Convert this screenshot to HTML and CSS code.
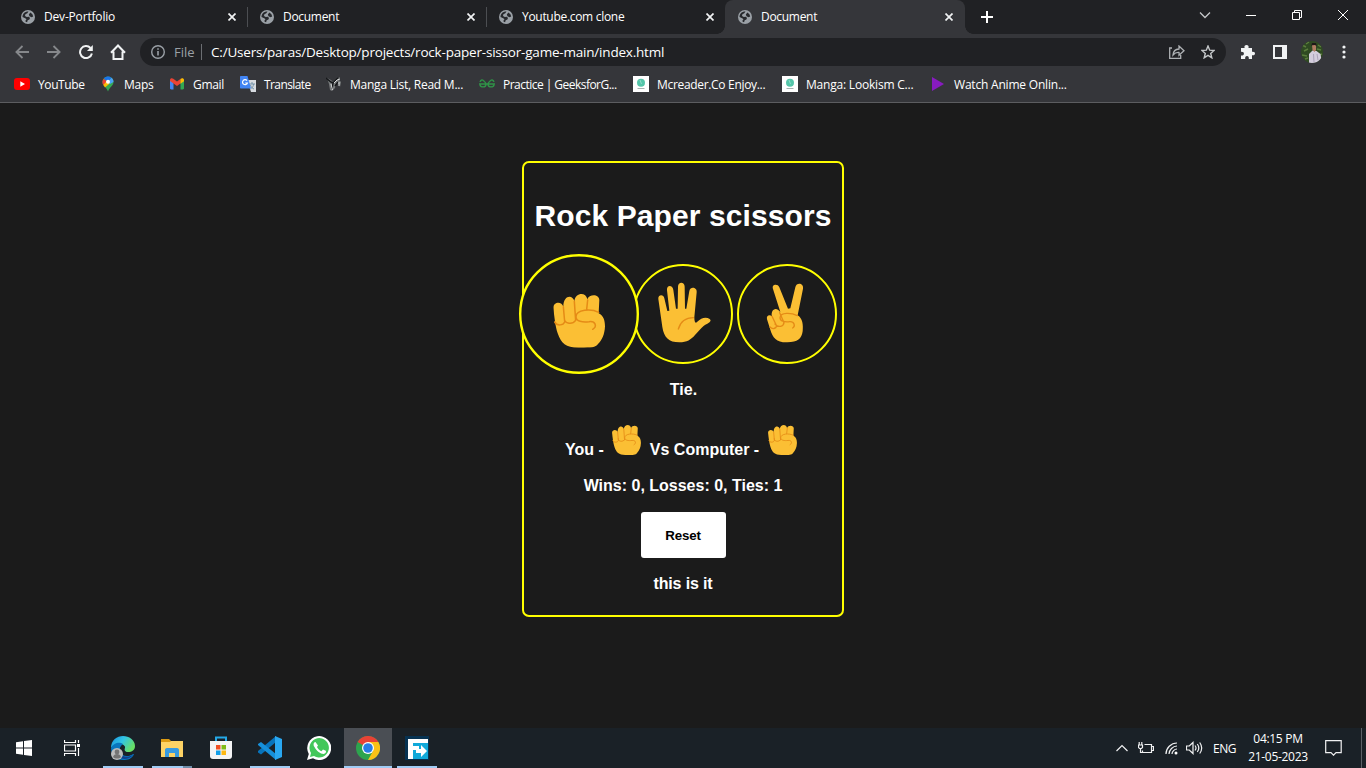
FILE: index.html
```html
<!DOCTYPE html>
<html lang="en">
<head>
<meta charset="utf-8">
<title>Document</title>
<link rel="stylesheet" href="styles.css">
</head>
<body>
<svg class="defs" width="0" height="0">
  <symbol id="globe" viewBox="0 0 14 14"><circle cx="7" cy="7" r="7" fill="#9aa0a6"/><path d="M7.500 1.500L6.300 3.200 4.400 4.200 4 6l1.800.9 2.100-.1 1.100 1.300-.6 1.400-1.700.8-.6 1.900-1.500-.5-.1-1.300 1-1.200-1.300-1L1.500 7C1.500 3.500 4.200 1.300 7.500 1.500zM9.400 2.400l2 1.800.8 2.300-1.700.7-2-1-.7-1.700z" fill="#27292d"/></symbol>
  <symbol id="close" viewBox="0 0 8 8"><path d="M.5.5l7 7M7.500.5l-7 7" stroke="#f1f3f4" stroke-width="1.700" fill="none"/></symbol>
  <symbol id="fist" viewBox="130 147 155 161">
    <path d="M130 189c-1-18 25-22 30-4 0-35 28-37 33-16 3-27 35-29 39-6 5-17 36-17 36 2l-2 40c15 8 19 22 19 39-1 24-9 42-21 53-8 11-19 11-54 11-42 1-56-11-67-43-7-20-10-50-13-76z" fill="#fbbf34"/>
    <path d="M134 231c8 13 26 10 30 0M163 220c0 19 26 18 33 7M160 185l4 45M193 169l4 58M233 165l-3 28M266 202c-23-12-67-9-68 13 0 15 20 17 39 15 20-3 25 15 11 23" fill="none" stroke="#e58b16" stroke-width="4.500" stroke-linecap="round"/>
  </symbol>
  <symbol id="reader" viewBox="0 0 16 16"><path fill="#fff" d="M0 0h16v16H0z"/><circle cx="8" cy="6.800" r="4" fill="#54c5a9"/><path d="M7 4l1.500 4" stroke="#8fdcc9"/><path d="M4.500 12.500h7" stroke="#a7b3b0"/></symbol>
</svg>
<div class="browser">
  <div class="tabs">
    <div class="tab"><svg class="fav"><use href="#globe"/></svg><span class="name t1">Dev-Portfolio</span><svg class="x"><use href="#close"/></svg></div>
    <div class="tab"><svg class="fav"><use href="#globe"/></svg><span class="name t2">Document</span><svg class="x"><use href="#close"/></svg></div>
    <div class="tab last"><svg class="fav"><use href="#globe"/></svg><span class="name t3">Youtube.com clone</span><svg class="x"><use href="#close"/></svg></div>
    <div class="tab active"><svg class="fav"><use href="#globe"/></svg><span class="name t2">Document</span><svg class="x"><use href="#close"/></svg></div>
    <svg class="plus" viewBox="0 0 12 12"><path d="M6 0v12M0 6h12" stroke="#fff" stroke-width="2"/></svg>
    <div class="winctl">
      <svg width="12" height="12" viewBox="0 0 12 12"><path d="M1 3.500l5 5 5-5" class="thin dim"/></svg>
      <svg width="10" height="12" viewBox="0 0 10 12"><path d="M0 6.500h10" class="thin"/></svg>
      <svg width="10" height="12" viewBox="0 0 10 12"><path d="M.5 3.500h7v7h-7zM2.500 3.500v-2h7v7h-2" class="thin"/></svg>
      <svg width="10" height="12" viewBox="0 0 10 12"><path d="M0 1l10 10M10 1L0 11" class="thin"/></svg>
    </div>
  </div>
  <div class="toolbar">
    <div class="nav">
      <svg width="14" height="14" viewBox="0 0 14 14"><path d="M14 7H1.500M7.500 1L1.400 7l6.100 6" fill="none" stroke="#86888b" stroke-width="1.800"/></svg>
      <svg width="14" height="14" viewBox="0 0 14 14"><path d="M0 7h12.500M6.500 1l6.100 6-6.100 6" fill="none" stroke="#86888b" stroke-width="1.800"/></svg>
      <svg width="14" height="14" viewBox="0 0 14 14"><path d="M12.900 8.500A6 6 0 1 1 11.500 3" fill="none" stroke="#f1f3f4" stroke-width="2"/><path d="M13.800 0v6H8z" fill="#f1f3f4"/></svg>
      <svg width="16" height="16" viewBox="0 0 16 16"><path d="M1 8.700L8 1.500l7 7.200M3.500 7.500V15h9V7.500" fill="none" stroke="#f1f3f4" stroke-width="2"/></svg>
    </div>
    <div class="omni">
      <svg width="14" height="14" viewBox="0 0 14 14"><circle cx="7" cy="7" r="6.300" fill="none" stroke="#9aa0a6" stroke-width="1.400"/><path d="M7 6v4.500M7 3.200v1.600" stroke="#9aa0a6" stroke-width="1.600"/></svg>
      <span class="file">File</span><i class="bar"></i><span class="url">C:/Users/paras/Desktop/projects/rock-paper-sissor-game-main/index.html</span>
      <svg class="share" width="16" height="14" viewBox="0 0 16 14"><path d="M3 3H.7v10.300h11V10M4 10c.3-4 2.500-5.800 6-6V1l5 4.700-5 4.500V7.500C7.500 7.300 5.700 8 4 10z" fill="none" stroke="#aeb1b4" stroke-width="1.300"/></svg>
      <svg class="star" width="14" height="14" viewBox="0 0 14 14"><path d="M7 1l1.700 4.200 4.300.3-3.300 2.900 1.100 4.400L7 10.400l-3.800 2.400 1.100-4.400L1 5.500l4.300-.3z" fill="none" stroke="#c4c7c9" stroke-width="1.400"/></svg>
    </div>
    <svg class="ext" width="15" height="15" viewBox="0 0 15 15"><path d="M1 3h3.600C4 .8 5 0 6.500 0S9 .8 8.500 3H12v3.800c2-.4 3 .4 3 1.700s-1 2.100-3 1.700V14H8.800c.3-2-.5-3-1.800-3s-2.100 1-1.800 3H1v-3.500c2 .2 2.900-.6 2.900-1.800S3 6.700 1 6.900z" fill="#f1f3f4"/></svg>
    <svg class="panel" width="14" height="14" viewBox="0 0 14 14"><path d="M0 0h14v14H0zM2 2v10h7V2z" fill="#f1f3f4" fill-rule="evenodd"/></svg>
    <svg class="avatar" width="22" height="22" viewBox="0 0 22 22"><defs><clipPath id="round"><circle cx="11" cy="11" r="11"/></clipPath></defs><g clip-path="url(#round)"><path fill="#2f4a22" d="M0 0h22v22H0z"/><path d="M1 4l4 2M3 10l4-2M1 14l5 1M17 4l3 2M16 8l4 1M5 3l3-2M4 18l3-1M18 14l3-1" stroke="#5a7d3c" stroke-width="1.500"/><path d="M8 22V13l3.500-3.500 4 .5 4 3 1.500 9z" fill="#d4cddd"/><path d="M11 4h4v5l-1.500 2-2-2z" fill="#b17c62"/><path d="M10.300 5L11 2h4l.8 3-2-1-2.500.3z" fill="#1d1818"/><path d="M12.500 13l.5 8M16 13l1 6" stroke="#aaa2b9"/></g></svg>
    <svg class="dots" width="4" height="14" viewBox="0 0 4 14"><g fill="#f1f3f4"><circle cx="2" cy="2" r="1.600"/><circle cx="2" cy="7" r="1.600"/><circle cx="2" cy="12" r="1.600"/></g></svg>
  </div>
  <div class="marks">
    <div class="mark m1"><svg viewBox="0 0 16 16"><rect y="2" width="16" height="12" rx="3" fill="#f00"/><path d="M6.300 5.300v5.400L11 8z" fill="#fff"/></svg><span>YouTube</span></div>
    <div class="mark m2"><svg viewBox="0 0 16 16"><path d="M8 .5A5.400 5.400 0 0 0 2.500 6C2.500 10 6.500 11 8 15.500 9.500 11 13.500 10 13.500 6A5.400 5.400 0 0 0 8 .5z" fill="#34a853"/><path d="M8 6L3.700 2.700A5.500 5.500 0 0 0 3.300 9z" fill="#ea4335"/><path d="M3.300 9L8 3.800 9.700 7.400 5 11.500z" fill="#fbbc04"/><path d="M8 6L3.800 2.500C6 0 9.500 0 11.500 1.800z" fill="#1a73e8"/><path d="M11.500 1.800L8 6l2 2 3.500-2c0-2-.8-3.300-2-4.200z" fill="#4ba1f5"/><circle cx="8" cy="5.800" r="2" fill="#fff"/></svg><span>Maps</span></div>
    <div class="mark m3"><svg viewBox="0 0 16 16"><path d="M1 4.500h3.500V13.500H2.200C1.500 13.500 1 13 1 12.300z" fill="#4285f4"/><path d="M11.500 4.500H15v7.800c0 .7-.5 1.200-1.200 1.200h-2.300z" fill="#34a853"/><path d="M1 4c0-1.600 2-2.300 3.300-1.200L8 5.600l3.700-2.800v4.500L8 10 1 5z" fill="#ea4335"/><path d="M11.500 3C13 1.700 15 2.500 15 4v1.200l-3.500 2.500z" fill="#fbbc04"/></svg><span>Gmail</span></div>
    <div class="mark m4"><svg viewBox="0 0 16 16"><path d="M7 4h9v12h-5z" fill="#d7dbe0"/><path d="M9 8h6M12 6v2M10.500 13c2-1.500 3-3 3-5M10.500 9c.5 2 2 3.500 3.500 4" stroke="#7292a8" fill="none"/><path d="M0 1C0 .4.400 0 1 0h6.500L11 12.500H1c-.6 0-1-.4-1-1z" fill="#4285f4"/><path d="M7 4.600A2.500 2.500 0 1 0 7.400 7H5.200" stroke="#fff" stroke-width="1.200" fill="none"/></svg><span>Translate</span></div>
    <div class="mark m5"><svg viewBox="0 0 16 16"><path d="M1 2l4 2 2 2 4-3 3-2-1 3 2 2-1 5-1-3-3 0-1 4-3 3-2-1-1-6z" fill="#777a7b"/><path d="M0 2l5 4 2 1 5-5M7 7l-1 6M12 6l-3 4" stroke="#16181a" stroke-width="1.500" fill="none"/><path d="M5 8l1.500 6M8 7l3-3 3-1M13 6v4" stroke="#d8dada" fill="none"/></svg><span>Manga List, Read M...</span></div>
    <div class="mark m6"><svg viewBox="0 0 16 16"><path d="M0 8h16M1 5.500C3-.5 7 7.500 7 8c0 5-5.500 4-6 1M15 5.500C13-.5 9 7.500 9 8c0 5 5.500 4 6 1" transform="translate(0 1.200) scale(1 .85)" fill="none" stroke="#2f9347" stroke-width="1.500"/></svg><span>Practice | GeeksforG...</span></div>
    <div class="mark m7"><svg><use href="#reader"/></svg><span>Mcreader.Co Enjoy...</span></div>
    <div class="mark m8"><svg><use href="#reader"/></svg><span>Manga: Lookism C...</span></div>
    <div class="mark m9"><svg viewBox="0 0 16 16"><path d="M2 1l12 7-12 7z" fill="#881bc0"/></svg><span>Watch Anime Onlin...</span></div>
  </div>
</div>
<main class="page">
  <section class="card">
    <h1>Rock Paper scissors</h1>
    <div class="moves">
      <button class="move chosen"><svg viewBox="34.200 34.200 345.600 345.600"><use href="#fist" x="130" y="147" width="155" height="161"/></svg></button>
      <button class="move"><svg viewBox="375 63 288 288"><path d="M445 162c-2-14 16-16 18-2l9 38 6-1-7-61c-2-17 17-18 19-1l8 56h5l1-66c0-16 20-16 20 0l1 66h4l9-53c3-15 24-11 22 4l-7 75c0 14 3 19 8 14 13-13 27-16 38-9 7 5-1 11-7 14-17 8-25 22-37 34-12 14-24 22-47 22-32 0-46-15-51-46z" fill="#fbbf34"/><path d="M505 252c7-23 20-34 45-34" fill="none" stroke="#e58b16" stroke-width="4" stroke-linecap="round"/></svg></button>
      <button class="move"><svg viewBox="687 63 288 288"><path d="M789 132c-5-15 15-16 19-5l26 64 7-1 15-63c3-16 26-13 23 4l-16 80c15 10 17 28 15 48-3 22-15 33-46 33-32 1-44-14-51-38l-10-31c-3-13 9-15 15-9-4-14 6-28 18-20l7 7z" fill="#fbbf34"/><path d="M780 246c7 8 18 5 20-3l-14-29M795 237c9 12 26 8 27-4l-13-30M862 212c-18-9-50-11-52 6 0 10 13 14 29 12 14-1 18 13 9 19" fill="none" stroke="#e58b16" stroke-width="4" stroke-linecap="round"/></svg></button>
    </div>
    <p class="result">Tie.</p>
    <div class="versus"><span>You -</span><svg class="mini"><use href="#fist"/></svg><span>Vs Computer -</span><svg class="mini"><use href="#fist"/></svg></div>
    <p class="score">Wins: 0, Losses: 0, Ties: 1</p>
    <button class="reset">Reset</button>
    <p class="foot">this is it</p>
  </section>
</main>
<footer class="taskbar">
  <div class="app"><svg width="16" height="16" viewBox="0 0 16 16"><path d="M0 2.300L7 1.300v6.300H0zM8 1.100L16 0v7.600H8zM0 8.500h7v6.300l-7-1zM8 8.500h8V16l-8-1.100z" fill="#fff"/></svg></div>
  <div class="app view"><svg width="16" height="16" viewBox="0 0 16 16"><path d="M.5 0v2.500h11V0M.5 16v-2.500h11V16M.5 5h11v6H.5zM14.500 0v3M14.500 8v8" fill="none" stroke="#fff" stroke-width="1.200"/><path d="M13 4h3v3h-3z" fill="#fff"/></svg></div>
  <div class="app run"><svg width="26" height="26" viewBox="0 0 26 26"><defs><linearGradient id="edge" x2="1" y2=".5"><stop stop-color="#168fe0"/><stop offset=".5" stop-color="#32c5e5"/><stop offset="1" stop-color="#68df65"/></linearGradient></defs><path d="M1 13C1 5 7 1 13 1s12 4 12 10c0 4-3 6-7 6-3 0-4-2-3-4 1-4-9-7-14 0z" fill="url(#edge)"/><path d="M1 13c3-6 9-6 12-4-6 4-3 12 4 12 4 0 5-2 7-2-2 5-6 6-11 6C6 25 1 20 1 13z" fill="#0876bf"/><path d="M9 14c0 7 7 10 14 6-5 6-15 5-17-2z" fill="#123e8d"/><circle cx="7" cy="19" r="6" fill="#bbbcbd"/><circle cx="7" cy="17" r="2.400" fill="#747474"/><path d="M3 22c1-4 7-4 8 0-2 2-6 2-8 0z" fill="#747474"/></svg></div>
  <div class="app run split"><svg width="22" height="20" viewBox="0 0 22 20"><path d="M0 1h8l2 2h11v4H0z" fill="#dc9b13"/><path d="M0 4h9l1-1h12v16H0z" fill="#fdd365"/><path d="M4 19v-7c0-1 .5-2 2-2h10c1.500 0 2 1 2 2v7h-4v-4H8v4z" fill="#389be0"/></svg></div>
  <div class="app"><svg width="24" height="24" viewBox="0 0 24 24"><path d="M7 6V1.500h10V6" fill="none" stroke="#24a9e8" stroke-width="2"/><path d="M1 5h22v15c0 2-1 3-3 3H4c-2 0-3-1-3-3z" fill="#f4f4f5"/><path d="M7 9h4.500v4.500H7z" fill="#f15024"/><path d="M12.500 9H17v4.500h-4.500z" fill="#7fba16"/><path d="M7 14.500h4.500V19H7z" fill="#139fe9"/><path d="M12.500 14.500H17V19h-4.500z" fill="#fdb813"/></svg></div>
  <div class="app run"><svg width="24" height="24" viewBox="0 0 24 24"><path d="M18 0v6L3 18.500 0 16.500V15z" fill="#0874bc"/><path d="M18 24v-6L3 6 0 8v1z" fill="#1690db"/><path d="M17 0l7 3v18l-7 3z" fill="#29a8f2"/></svg></div>
  <div class="app"><svg width="24" height="24" viewBox="0 0 24 24"><path d="M0 24l1.800-6A12 12 0 1 1 6 22.300z" fill="#fff"/><path d="M3 21l1-4A9.700 9.700 0 1 1 7 20z" fill="#43c75a"/><path d="M8.500 6c-2 0-2.500 3-1 5 2 4 6 7 9 7 2-.2 3-2 2.300-3.200L16 13.500l-1.600 1.700c-2-.8-3.500-2.200-4.400-4.100L11 9.500z" fill="#fff"/></svg></div>
  <div class="app run current"><svg width="24" height="24" viewBox="0 0 24 24"><circle cx="12" cy="12" r="12" fill="#2da44e"/><path d="M12 12L1.600 6A12 12 0 0 1 22.400 6z" fill="#e94235"/><path d="M12 6h10.400A12 12 0 0 1 12 24l5-9z" fill="#fbc116"/><circle cx="12" cy="12" r="6" fill="#fff"/><circle cx="12" cy="12" r="4.800" fill="#287de7"/></svg></div>
  <div class="app run"><svg width="24" height="24" viewBox="0 0 24 24"><path d="M0 0h24v24H0z" fill="#063252"/><path d="M8 7h15v16H8z" fill="#10a9da"/><path d="M3 3h20v4H8v3h6v4H8v9H3z" fill="#fff"/><path d="M11 13h5V9l6 6-6 6v-4h-5z" fill="#fff"/></svg></div>
  <div class="tray">
    <svg width="12" height="8" viewBox="0 0 12 8"><path d="M.5 7L6 1.500 11.500 7" class="tk"/></svg>
    <svg class="bat" width="16" height="12" viewBox="0 0 16 12"><path d="M6.500 2.500h7v8h-9V8.500M14 4.500h1.500v4H14M1.200 0v2.500M3.800 0v2.500M.5 3h4v2.500l-1 1h-2l-1-1zM2.500 7v3.500h2" class="tk"/></svg>
    <svg class="wifi" width="13" height="13" viewBox="0 0 13 13"><path d="M1 12C1 6 6 1 12 1M4 12c0-4 4-8 8-8M7 12c0-2.500 2.500-5 5-5" class="tk"/><circle cx="11" cy="11" r="1.500" fill="#fff"/></svg>
    <svg class="vol" width="17" height="14" viewBox="0 0 17 14"><path d="M.5 5h2.800L7 1.500v11L3.300 9H.5zM9 4.500q2 2.500 0 5M11.300 3q3 4 0 8M13.700 1.500q4 5.500 0 11" class="tk"/></svg>
    <span class="lang">ENG</span>
    <div class="clock"><span>04:15 PM</span><span class="date">21-05-2023</span></div>
    <svg class="note" width="17" height="16" viewBox="0 0 17 16"><path d="M.7.700h15.500v12H11l-2.500 2.500L6 12.700H.7z" class="tk"/></svg>
    <i class="peek"></i>
  </div>
</footer>
</body>
</html>
```
FILE: styles.css
```css
* { box-sizing: border-box; }
body { margin: 0; width: 1366px; height: 768px; overflow: hidden; display: flex; flex-direction: column; background: #1b1b1b; font-family: "Open Sans", "Noto Sans", sans-serif; color: #fff; }
svg { display: block; flex: none; }
.defs { position: absolute; }
p, h1 { margin: 0; }
button { padding: 0; }
.thin { fill: none; stroke: #fff; stroke-width: 1; }
.dim { stroke: #c5c7ca; stroke-width: 1.3; }
.tk { fill: none; stroke: #f0f1f2; stroke-width: 1.2; }

.browser { height: 103px; background: #35363a; border-bottom: 1px solid #5c5d60; flex: none; }
.tabs { height: 34px; background: #202124; display: flex; align-items: center; padding-left: 9px; }
.tab { width: 239px; height: 34px; padding: 0 12px; display: flex; align-items: center; position: relative; font-size: 12px; }
.tab:not(.active):not(.last)::after { content: ""; position: absolute; right: 0; top: 7px; width: 1px; height: 20px; background: #4c4e52; }
.fav { width: 14px; height: 14px; margin-right: 9px; }
.name { flex: 1; white-space: nowrap; line-height: 16px; }
.t1 { letter-spacing: -.18px; }
.t2 { letter-spacing: -.3px; }
.t3 { letter-spacing: -.3px; }
.x { width: 8px; height: 8px; }
.active { width: 240px; background: #35363a; border-radius: 8px 8px 0 0; margin-left: -1px; padding: 0 12px 0 13px; }
.active::before, .active::after { content: ""; position: absolute; bottom: 0; width: 8px; height: 8px; }
.active::before { left: -8px; background: radial-gradient(circle at 0 0, transparent 7.5px, #35363a 8px); }
.active::after { right: -8px; background: radial-gradient(circle at 100% 0, transparent 7.5px, #35363a 8px); }
.plus { width: 12px; height: 12px; margin-left: 16px; }
.winctl { display: flex; gap: 36px; margin: -5px 18px 0 auto; }
.winctl svg:first-child { margin-right: -1px; }

.toolbar { height: 34px; padding-top: 2px; display: flex; align-items: center; }
.nav { width: 140px; padding-left: 15px; display: flex; align-items: center; gap: 18px; }
.nav svg:last-child { margin-left: -1px; }
.omni { width: 1086px; height: 28px; margin-top: 0; background: #202124; border-radius: 14px; padding: 0 11px; display: flex; align-items: center; font-size: 14px; white-space: nowrap; }
.file { color: #9aa0a6; width: 27px; margin-left: 9px; font-size: 13px; }
.bar { width: 1px; height: 16px; background: #6b6e72; margin-right: 9px; }
.url { font-size: 13.5px; letter-spacing: -.2px; }
.share { margin-left: auto; margin-right: 16px; }
.ext { margin-left: 14px; }
.panel { margin-left: 18px; }
.avatar { margin-left: 14px; }
.dots { margin-left: 19px; }

.marks { height: 34px; display: flex; font-size: 12px; padding-left: 14px; }
.mark { height: 32px; display: flex; align-items: center; gap: 8px; white-space: nowrap; }
.mark svg { width: 16px; height: 16px; }
.m1 { width: 86px; letter-spacing: -.4px; }
.m2 { width: 69px; letter-spacing: -.25px; }
.m3 { width: 71px; letter-spacing: -.3px; }
.m4 { width: 86px; letter-spacing: -.6px; }
.m5 { width: 153px; letter-spacing: -.24px; }
.m6 { width: 154px; letter-spacing: -.53px; }
.m7, .m8 { width: 149px; }
.m7 { letter-spacing: -.32px; }
.m8 { letter-spacing: -.2px; }
.m9 { letter-spacing: -.2px; margin-left: -1px; }

.page { flex: 1; padding-top: 58px; font-family: "Liberation Sans", Arial, sans-serif; font-weight: 700; }
.card { width: 322px; height: 456px; margin: 0 auto; border: 2px solid #ff0; border-radius: 7px; padding-top: 35px; text-align: center; font-size: 16px; line-height: 18px; }
h1 { font-size: 30px; line-height: 36px; letter-spacing: .1px; white-space: nowrap; }
.moves { display: flex; justify-content: center; gap: 4px; margin-top: 30px; }
.move { width: 100px; height: 100px; flex: none; border: 2px solid #ff0; border-radius: 50%; background: #1b1b1b; }
.move svg { width: 96px; height: 96px; }
.chosen { transform: scale(1.2); }
.result { margin-top: 17px; padding-left: 1px; }
.versus { height: 34px; margin-top: 26px; display: flex; align-items: flex-end; padding-left: 41px; }
.mini { width: 29px; height: 30px; margin: 0 9px 4px 8px; }
.mini:last-child { margin-left: 9px; }
.score { margin-top: 18px; }
.reset { width: 85px; height: 46px; margin-top: 17px; border: 0; border-radius: 3px; background: #fff; color: #000; font: 700 13.333px "Liberation Sans", Arial, sans-serif; letter-spacing: -.2px; }
.foot { margin-top: 17px; letter-spacing: -.15px; }

.taskbar { height: 40px; flex: none; background: #1a2127; display: flex; }
.app { width: 48px; height: 40px; margin-right: 1px; display: flex; align-items: center; justify-content: center; position: relative; }
.taskbar .app:first-child { margin-right: 0; }
.taskbar .view { margin-right: 3px; }
.run::after { content: ""; position: absolute; bottom: 0; left: 4px; width: 40px; height: 2px; background: #a0ccf5; }
.split::after { width: 40px; background: linear-gradient(90deg, #a0ccf5 31px, #6f8da9 31px); }
.current { background: #4a4e54; }
.taskbar .current::after { left: 0; width: 48px; }
.tray { margin-left: auto; display: flex; align-items: center; }
.bat { margin-left: 10px; }
.wifi { margin-left: 11px; }
.vol { margin-left: 8px; }
.lang { font-size: 12px; width: 23px; margin-left: 10px; letter-spacing: -.5px; }
.clock { width: 60px; margin-left: 12px; display: flex; flex-direction: column; align-items: center; font-size: 12px; line-height: 18px; letter-spacing: -.3px; white-space: nowrap; margin-top: -1px; }
.note { margin-left: 17px; }
.peek { width: 1px; height: 40px; margin: 0 4px 0 19px; background: #5b6167; }
```
